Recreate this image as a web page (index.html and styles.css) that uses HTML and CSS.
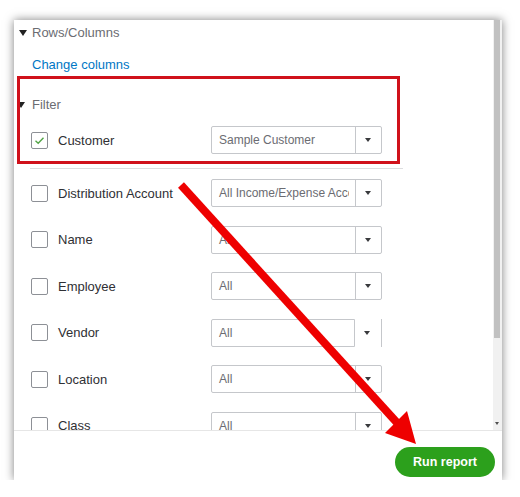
FILE: index.html
```html
<!DOCTYPE html>
<html>
<head>
    <title>Report Filters</title>
    <link rel="stylesheet" href="styles.css">
</head>
<body>
    <div class="report-panel">
        <div class="panel-body">
            <div class="panel-scroll">
                <div class="section-head"><span class="caret"></span>Rows/Columns</div>
                <a class="change-link" href="#">Change columns</a>
                <div class="section-head filter-head"><span class="caret"></span>Filter</div>

                <div class="filter-row">
                    <span class="checkbox checked">
                        <svg width="11" height="9" viewBox="0 0 11 9"><path d="M1.5 4.8 L4.2 7.2 L9.5 1.8" fill="none" stroke="#53a548" stroke-width="1.4"/></svg>
                    </span>
                    <span class="filter-label">Customer</span>
                    <div class="select-box">
                        <span class="select-value">Sample Customer</span>
                        <span class="select-arrow"></span>
                    </div>
                </div>

                <div class="filter-divider"></div>

                <div class="filter-list">
                    <div class="filter-row">
                        <span class="checkbox"></span>
                        <span class="filter-label">Distribution Account</span>
                        <div class="select-box">
                            <span class="select-value">All Income/Expense Accounts</span>
                            <span class="select-arrow"></span>
                        </div>
                    </div>
                    <div class="filter-row">
                        <span class="checkbox"></span>
                        <span class="filter-label">Name</span>
                        <div class="select-box">
                            <span class="select-value">All</span>
                            <span class="select-arrow"></span>
                        </div>
                    </div>
                    <div class="filter-row">
                        <span class="checkbox"></span>
                        <span class="filter-label">Employee</span>
                        <div class="select-box">
                            <span class="select-value">All</span>
                            <span class="select-arrow"></span>
                        </div>
                    </div>
                    <div class="filter-row">
                        <span class="checkbox"></span>
                        <span class="filter-label">Vendor</span>
                        <div class="select-box select-open">
                            <span class="select-value">All</span>
                            <span class="select-arrow"></span>
                        </div>
                    </div>
                    <div class="filter-row">
                        <span class="checkbox"></span>
                        <span class="filter-label">Location</span>
                        <div class="select-box">
                            <span class="select-value">All</span>
                            <span class="select-arrow"></span>
                        </div>
                    </div>
                    <div class="filter-row">
                        <span class="checkbox"></span>
                        <span class="filter-label">Class</span>
                        <div class="select-box">
                            <span class="select-value">All</span>
                            <span class="select-arrow"></span>
                        </div>
                    </div>
                </div>
            </div>
            <div class="scrollbar">
                <div class="scroll-thumb"></div>
                <div class="scroll-track"><span class="scroll-down"></span></div>
            </div>
        </div>
        <div class="panel-footer">
            <button class="run-button">Run report</button>
        </div>

        <!-- annotation: highlight around the filter section -->
        <div class="highlight-box"></div>
    </div>

    <!-- annotation: arrow pointing at the button -->
    <svg class="annotation-arrow" width="520" height="497" viewBox="0 0 520 497">
        <line x1="181" y1="185" x2="400" y2="426" stroke="#ee0000" stroke-width="8"/>
        <polygon points="416,444 385,433 407,411" fill="#ee0000"/>
    </svg>
</body>
</html>
```

FILE: styles.css
```css
body {
    margin: 0;
    background: #fff;
    font-family: "Liberation Sans", Arial, sans-serif;
    color: #393a3d;
}
.report-panel {
    position: relative;
    margin: 20px 0 0 14px;
    width: 488px;
    height: 460px;
    background: #fff;
    box-shadow: 0 0 9px rgba(0,0,0,0.5);
    display: flex;
    flex-direction: column;
}
.panel-body {
    display: flex;
    height: 410px;
    overflow: hidden;
}
.panel-scroll {
    flex: 1;
    padding: 5px 0 0 5px;
    overflow: hidden;
}
.section-head {
    display: flex;
    align-items: center;
    font-size: 13px;
    line-height: 16px;
    color: #6b6c72;
}
.caret {
    width: 0;
    height: 0;
    border-left: 4px solid transparent;
    border-right: 4px solid transparent;
    border-top: 6px solid #222;
    margin-right: 5px;
}
.filter-head {
    margin-top: 24px;
    margin-left: -2px;
}
.filter-head .caret {
    margin-right: 7px;
}
.change-link {
    display: block;
    margin: 16px 0 0 13px;
    font-size: 13px;
    line-height: 16px;
    color: #0077c5;
    text-decoration: none;
}
.filter-row {
    display: flex;
    align-items: center;
    height: 28px;
    margin-top: 13px;
    padding-left: 12px;
}
.filter-list {
    display: flex;
    flex-direction: column;
    gap: 18.6px;
    margin-top: 10px;
}
.filter-list .filter-row {
    margin-top: 0;
}
.checkbox {
    width: 15px;
    height: 15px;
    border: 1px solid #8d9096;
    border-radius: 2px;
    display: flex;
    align-items: center;
    justify-content: center;
    flex-shrink: 0;
}
.filter-label {
    width: 153px;
    margin-left: 10px;
    font-size: 13px;
    color: #2f3034;
    white-space: nowrap;
}
.select-box {
    display: flex;
    width: 171px;
    height: 28px;
    box-sizing: border-box;
    border: 1px solid #c5c7cb;
    border-radius: 2px;
}
.select-value {
    flex: 1;
    padding-left: 7px;
    border-right: 6px solid transparent;
    font-size: 12px;
    line-height: 26px;
    color: #6b6c72;
    white-space: nowrap;
    overflow: hidden;
}
.select-arrow {
    width: 25px;
    border-left: 1px solid #c5c7cb;
    position: relative;
}
.select-arrow::after {
    content: "";
    position: absolute;
    left: 9px;
    top: 11px;
    border-left: 3.5px solid transparent;
    border-right: 3.5px solid transparent;
    border-top: 4px solid #393a3d;
}
/* the vendor dropdown: only the value part keeps its frame */
.select-open {
    border: none;
}
.select-open .select-value {
    border: 1px solid #c5c7cb;
    border-radius: 2px 0 0 2px;
}
.select-open .select-arrow {
    width: 26px;
    border-left: none;
    border-right: 1px solid #c5c7cb;
}
.select-open .select-arrow::after {
    top: 12px;
}
.filter-divider {
    height: 1px;
    background: #dcdddf;
    margin: 14px 0 0 11px;
    width: 373px;
}
.scrollbar {
    width: 9px;
    display: flex;
    flex-direction: column;
    background: #f1f1f1;
}
.scroll-thumb {
    height: 318px;
    margin: 0 2px 0 1px;
    background: #c1c1c1;
}
.scroll-track {
    flex: 1;
    position: relative;
}
.scroll-down {
    position: absolute;
    left: 2px;
    bottom: 5px;
    border-left: 2.5px solid transparent;
    border-right: 2.5px solid transparent;
    border-top: 3px solid #505050;
}
.panel-footer {
    flex: 1;
    border-top: 1px solid #e6e6e6;
    display: flex;
    justify-content: flex-end;
    align-items: flex-end;
    padding: 0 7px 3px 0;
}
.run-button {
    width: 100px;
    height: 30px;
    border: none;
    border-radius: 15px;
    background: #2ca01c;
    color: #fff;
    font-family: "Liberation Sans", Arial, sans-serif;
    font-weight: bold;
    font-size: 12.5px;
    cursor: pointer;
}
.highlight-box {
    position: absolute;
    left: 3px;
    top: 56px;
    width: 377px;
    height: 82px;
    border: 3px solid #d0111b;
}
.annotation-arrow {
    position: absolute;
    left: 0;
    top: 0;
    pointer-events: none;
}
```
